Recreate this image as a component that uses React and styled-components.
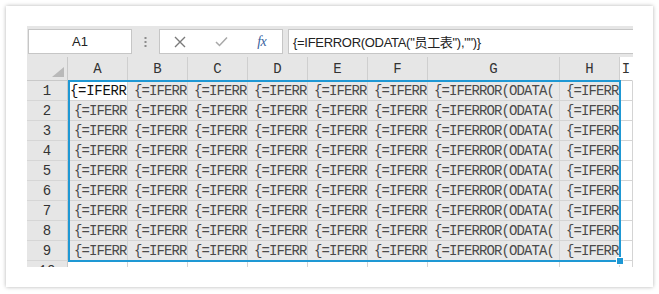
import React from "react";
import styled, { createGlobalStyle } from "styled-components";

const GlobalStyle = createGlobalStyle`
  body {
    margin: 0;
    background: #ffffff;
  }
`;

const COLUMNS = ["A", "B", "C", "D", "E", "F", "G", "H", "I"];
const ROWS = [1, 2, 3, 4, 5, 6, 7, 8, 9, 10];
const FORMULA = '{=IFERROR(ODATA("员工表"),"")}';

// what each column shows of the formula before it gets clipped
const visibleText = (col) => (col === "G" ? "{=IFERROR(ODATA(" : "{=IFERR");

const Page = styled.div`
  padding: 6px;
`;

const Card = styled.div`
  box-sizing: border-box;
  width: 647px;
  height: 281px;
  padding: 20px 0 0 21px;
  background: #ffffff;
  box-shadow: 0 0 4px rgba(0, 0, 0, 0.3);
`;

const Sheet = styled.div`
  width: 606px;
  height: 241px;
  overflow: hidden;
  background: #e6e6e6;
`;

const FormulaBar = styled.div`
  box-sizing: border-box;
  display: flex;
  height: 31px;
  padding: 3px 0 3px 1px;
  background: #e6e6e6;
`;

const NameBox = styled.div`
  box-sizing: border-box;
  width: 104px;
  display: flex;
  align-items: center;
  justify-content: center;
  background: #ffffff;
  border: 1px solid #c6c6c6;
  font: 13px "Liberation Sans", "Noto Sans CJK SC", sans-serif;
  color: #222;
`;

const Grip = styled.div`
  width: 27px;
  display: flex;
  align-items: center;
  justify-content: center;
`;

const ButtonsBox = styled.div`
  box-sizing: border-box;
  width: 124px;
  display: flex;
  align-items: center;
  background: #ffffff;
  border: 1px solid #c6c6c6;
`;

const BarButton = styled.div`
  width: 41px;
  display: flex;
  align-items: center;
  justify-content: center;
`;

const FxLabel = styled.span`
  font: italic 14px "Liberation Serif", serif;
  color: #3b5f9e;
  letter-spacing: -0.5px;
`;

const FormulaInput = styled.div`
  box-sizing: border-box;
  flex: 1;
  margin-left: 5px;
  padding-left: 4px;
  display: flex;
  align-items: center;
  background: #ffffff;
  border: 1px solid #c6c6c6;
  border-right: none;
  font: 13px "Liberation Sans", "Noto Sans CJK SC", sans-serif;
  letter-spacing: -0.3px;
  color: #222;
  white-space: nowrap;
`;

const Grid = styled.div`
  position: relative;
  display: grid;
  grid-template-columns: 41px repeat(6, 60px) 132px 60px 1fr;
  grid-template-rows: 24px repeat(10, 20px);
  background: #ffffff;
`;

const HeadCell = styled.div`
  box-sizing: border-box;
  display: flex;
  align-items: center;
  justify-content: center;
  background: ${(p) => (p.$plain ? "#ffffff" : "#e6e6e6")};
  border-right: 1px solid ${(p) => (p.$plain ? "#ffffff" : "#cfcfcf")};
  border-bottom: 1px solid #c9c9c9;
  font: 14px "Liberation Mono", monospace;
  color: #333;
  padding-top: 1px;
`;

const Corner = styled(HeadCell)`
  position: relative;
  border-right-color: #c9c9c9;
`;

const CornerTriangle = styled.div`
  position: absolute;
  right: 3px;
  bottom: 3px;
  width: 0;
  height: 0;
  border-left: 12px solid transparent;
  border-bottom: 10px solid #b9b9b9;
`;

const RowHead = styled(HeadCell)`
  border-right-color: #c9c9c9;
  border-bottom-color: #d6d6d6;
`;

const Cell = styled.div`
  box-sizing: border-box;
  display: flex;
  align-items: center;
  overflow: hidden;
  white-space: nowrap;
  padding-left: ${(p) => (p.$active ? "2px" : "6px")};
  background: ${(p) => (p.$selected && !p.$active ? "#e8e8e8" : "#ffffff")};
  border-right: 1px solid #d4d4d4;
  border-bottom: 1px solid #d4d4d4;
  font: 14px "Liberation Mono", monospace;
  letter-spacing: ${(p) => (p.$active ? "-0.3px" : "-0.9px")};
  color: ${(p) => (p.$active ? "#111" : "#4a4a4a")};
`;

const Selection = styled.div`
  position: absolute;
  left: 41px;
  top: 23px;
  width: 553px;
  height: 182px;
  box-sizing: border-box;
  border: 2px solid #1e98d4;
  pointer-events: none;
`;

const FillHandle = styled.div`
  position: absolute;
  right: -5px;
  bottom: -5px;
  width: 6px;
  height: 6px;
  background: #1e98d4;
  border: 1px solid #ffffff;
`;

const GripDots = () => (
  <svg width="3" height="10" viewBox="0 0 3 10">
    <rect x="0.5" y="0" width="2" height="2" fill="#8c8c8c" />
    <rect x="0.5" y="4" width="2" height="2" fill="#8c8c8c" />
    <rect x="0.5" y="8" width="2" height="2" fill="#8c8c8c" />
  </svg>
);

const CancelIcon = () => (
  <svg width="12" height="12" viewBox="0 0 12 12">
    <path d="M1 1 L11 11 M11 1 L1 11" stroke="#7a7a7a" strokeWidth="1.4" fill="none" />
  </svg>
);

const CheckIcon = () => (
  <svg width="13" height="11" viewBox="0 0 13 11">
    <path d="M1 6 L4.5 9.5 L12 1.5" stroke="#a8a8a8" strokeWidth="1.5" fill="none" />
  </svg>
);

const App = () => {
  return (
    <Page>
      <GlobalStyle />
      <Card>
        <Sheet>
          <FormulaBar>
            <NameBox>A1</NameBox>
            <Grip>
              <GripDots />
            </Grip>
            <ButtonsBox>
              <BarButton>
                <CancelIcon />
              </BarButton>
              <BarButton>
                <CheckIcon />
              </BarButton>
              <BarButton>
                <FxLabel>fx</FxLabel>
              </BarButton>
            </ButtonsBox>
            <FormulaInput>{FORMULA}</FormulaInput>
          </FormulaBar>
          <Grid>
            <Corner>
              <CornerTriangle />
            </Corner>
            {COLUMNS.map((c) => (
              <HeadCell key={c} $plain={c === "I"}>
                {c}
              </HeadCell>
            ))}
            {ROWS.map((r) => (
              <React.Fragment key={r}>
                <RowHead>{r}</RowHead>
                {COLUMNS.map((c) => {
                  const selected = r <= 9 && c !== "I";
                  const active = r === 1 && c === "A";
                  return (
                    <Cell key={c} $selected={selected} $active={active}>
                      {selected ? visibleText(c) : ""}
                    </Cell>
                  );
                })}
              </React.Fragment>
            ))}
            <Selection>
              <FillHandle />
            </Selection>
          </Grid>
        </Sheet>
      </Card>
    </Page>
  );
};

export default App;
